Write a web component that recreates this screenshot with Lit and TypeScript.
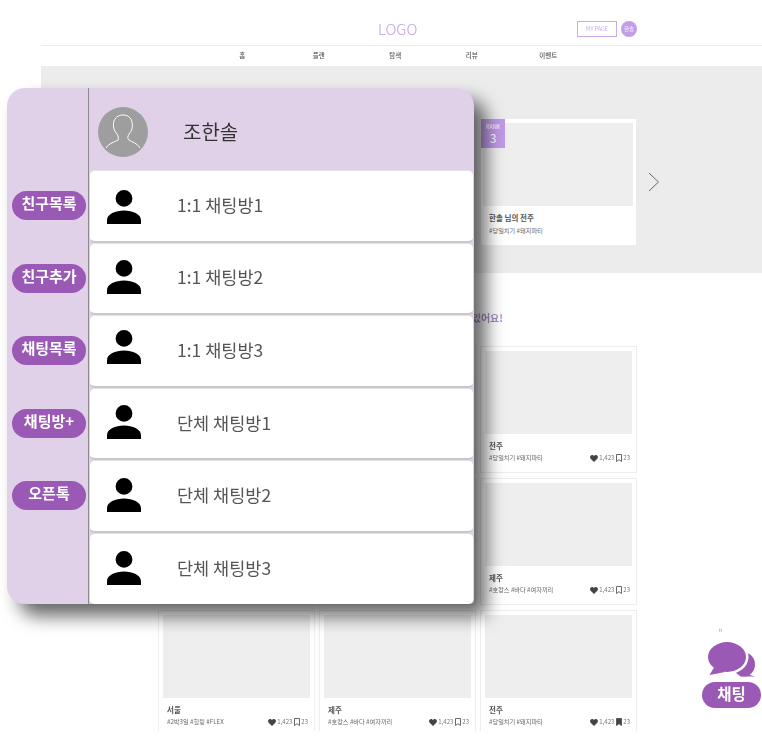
import { LitElement, html, css, svg } from 'lit'
import { customElement } from 'lit/decorators.js'

type Course = { city: string; tags: string; saved?: boolean; covered?: boolean }

const NAV = ['홈', '플랜', '탐색', '리뷰', '이벤트']
const COURSES: Course[] = [
  { city: '', tags: '', covered: true },
  { city: '', tags: '', covered: true },
  { city: '전주', tags: '#당일치기 #돼지파티' },
  { city: '', tags: '', covered: true },
  { city: '', tags: '', covered: true },
  { city: '제주', tags: '#호캉스 #바다 #여자끼리' },
  { city: '서울', tags: '#2박3일 #힐링 #FLEX' },
  { city: '제주', tags: '#호캉스 #바다 #여자끼리' },
  { city: '전주', tags: '#당일치기 #돼지파티', saved: true }
]
const MENU = ['친구목록', '친구추가', '채팅목록', '채팅방+', '오픈톡']
// dy: the icons do not sit at the same height in every row
const ROOMS = [
  { name: '1:1 채팅방1', dy: 1 },
  { name: '1:1 채팅방2', dy: -1 },
  { name: '1:1 채팅방3', dy: -4 },
  { name: '단체 채팅방1', dy: -2 },
  { name: '단체 채팅방2', dy: -1 },
  { name: '단체 채팅방3', dy: -1 }
]

const personIcon = svg`<path d="M17 0a8.4 8.4 0 1 1 0 16.8a8.4 8.4 0 1 1 0-16.8zM0 34v-3.5C0 24 8.5 20.6 17 20.6s17 3.4 17 9.9V34z"/>`

@customElement('app-root')
export class AppRoot extends LitElement {
  static styles = css`
    :host {
      display: block;
      position: relative;
      width: 762px;
      height: 747px;
      overflow: hidden;
      background: #fff;
      font-family: 'Noto Sans CJK KR', 'Noto Sans', sans-serif;
    }

    .page {
      height: 731px;
      margin-left: 41px;
      overflow: hidden;
      filter: blur(0.45px);
    }

    .top {
      height: 45px;
      display: flex;
      align-items: center;
      border-bottom: 1px solid #ebebeb;
    }

    .logo {
      margin-left: 337px;
      width: 199px;
      padding-top: 13px;
      font-size: 15px;
      font-weight: 300;
      line-height: 20px;
      color: #c3a2e6;
    }

    .my-page {
      width: 40px;
      height: 16px;
      margin-top: 13px;
      box-sizing: border-box;
      border: 1px solid #c9ace9;
      font-size: 5.5px;
      line-height: 14px;
      text-align: center;
      color: #c9ace9;
    }

    .me {
      width: 16px;
      height: 16px;
      margin: 13px 0 0 4px;
      border-radius: 50%;
      background: #c39ee8;
      color: #fff;
      font-size: 5.5px;
      line-height: 16px;
      text-align: center;
    }

    .nav {
      display: grid;
      grid-template-columns: repeat(5, 76.5px);
      height: 20px;
      margin-left: 163px;
      font-size: 6.5px;
      font-weight: 500;
      line-height: 19px;
      text-align: center;
      color: #555;
    }

    .hero {
      height: 207px;
      background: #ececec;
      display: flex;
      align-items: flex-start;
      padding: 53px 0 0 440px;
      box-sizing: border-box;
    }

    .rank-card {
      position: relative;
      width: 155px;
      height: 126px;
      padding: 4px 3px 0 2px;
      box-sizing: border-box;
      background: #fff;
    }

    .rank-card .thumb {
      height: 83px;
    }

    .rank-card .title {
      margin: 6px 0 0 6px;
    }

    .rank-card .tags {
      margin: 3px 0 0 6px;
    }

    .badge {
      position: absolute;
      left: 0;
      top: 0;
      width: 24px;
      height: 29px;
      background: #bf9ae6;
      color: #fff;
      font-size: 5.5px;
      line-height: 6px;
      text-align: center;
      padding-top: 5px;
      box-sizing: border-box;
    }

    .badge b {
      display: block;
      margin-top: 1px;
      font-size: 12px;
      font-weight: 400;
      line-height: 13px;
    }

    .next {
      margin: 53px 0 0 12px;
    }

    .heading {
      width: 462px;
      margin: 38px 0 21px;
      font-size: 10px;
      font-weight: 700;
      line-height: 14px;
      text-align: right;
      color: #a98cc9;
    }

    .courses {
      display: grid;
      grid-template-columns: repeat(3, 157px);
      column-gap: 4px;
      row-gap: 5px;
      margin-left: 117px;
    }

    .card {
      height: 127px;
      padding: 4px;
      box-sizing: border-box;
      border: 1px solid #eeeeee;
    }

    .thumb {
      height: 83px;
      background: #eeeeee;
    }

    .title {
      margin: 6px 0 0 4px;
      font-size: 7.5px;
      font-weight: 700;
      line-height: 11px;
      color: #555;
    }

    .tags {
      font-size: 6.2px;
      line-height: 10px;
      color: #666;
    }

    .foot {
      display: flex;
      align-items: center;
      justify-content: space-between;
      margin: 2px 2px 0 4px;
    }

    .stats {
      display: flex;
      align-items: center;
      gap: 1px;
      font-size: 6px;
      line-height: 10px;
      color: #777;
    }

    .stats span:first-of-type {
      margin-right: 1px;
    }

    .chat {
      position: absolute;
      left: 7px;
      top: 88px;
      width: 467px;
      height: 516px;
      display: flex;
      overflow: hidden;
      box-sizing: border-box;
      background: #e0d0e8;
      border-radius: 18px 18px 5px 18px;
      box-shadow: 12px 12px 18px rgba(0, 0, 0, 0.6);
    }

    .menu {
      flex: none;
      width: 81px;
      padding: 103px 0 0 5px;
      box-sizing: border-box;
      display: flex;
      flex-direction: column;
      gap: 43.6px;
    }

    .menu button {
      width: 74px;
      height: 29px;
      padding: 0 0 5px;
      border: 0;
      border-radius: 15px;
      background: #9b59b6;
      color: #fff;
      font-family: inherit;
      font-size: 15px;
      font-weight: 700;
      line-height: 20px;
    }

    .side {
      flex: 1;
      min-width: 0;
      border-left: 1px solid #8c8a8e;
      display: flex;
      flex-direction: column;
    }

    .me-row {
      flex: none;
      height: 82px;
      display: flex;
      align-items: center;
      padding: 5px 0 0 9px;
      box-sizing: border-box;
      font-size: 20px;
      color: #333;
    }

    .me-row span {
      margin-left: 35px;
    }

    .avatar {
      display: block;
    }

    .room {
      flex: none;
      height: 72.6px;
      margin: 0 1px;
      display: flex;
      align-items: center;
      padding-left: 17px;
      box-sizing: border-box;
      background: #fff;
      border-radius: 5px;
      border-top: 1px solid #e4e2e6;
      border-bottom: 2px solid #c8c6ca;
      font-size: 17.5px;
      color: #555;
    }

    .room svg {
      flex: none;
    }

    .room span {
      margin: 0 0 3px 36px;
    }

    .fab {
      position: absolute;
      left: 702px;
      top: 626px;
      width: 59px;
      display: flex;
      flex-direction: column;
      align-items: center;
    }

    .fab small {
      height: 16px;
      margin-right: 22px;
      font-size: 4px;
      line-height: 8px;
      color: #888;
    }

    .fab svg {
      display: block;
    }

    .fab div {
      width: 59px;
      height: 26px;
      margin-top: 4px;
      border-radius: 13px;
      background: #9b59b6;
      color: #fff;
      font-size: 15.5px;
      font-weight: 700;
      line-height: 23px;
      text-align: center;
    }
  `

  private renderCourse(course: Course) {
    if (course.covered) {
      return html`<div class="card"><div class="thumb"></div></div>`
    }
    return html`
      <div class="card">
        <div class="thumb"></div>
        <div class="title">${course.city}</div>
        <div class="foot">
          <div class="tags">${course.tags}</div>
          <div class="stats">
            <svg width="8" height="7" viewBox="0 0 8 7"><path fill="#444" d="M4 7L.7 3.700C-.6 2.300.3 0 2 0c.9 0 1.600.5 2 1.100C4.400.5 5.100 0 6 0c1.700 0 2.600 2.300 1.300 3.700z"/></svg>
            <span>1,423</span>
            <svg width="6" height="8" viewBox="0 0 6 8"><path fill=${course.saved ? '#444' : 'none'} stroke="#444" stroke-width=".8" d="M.5.5h5v7L3 5.700.5 7.500z"/></svg>
            <span>23</span>
          </div>
        </div>
      </div>
    `
  }

  render() {
    return html`
      <div class="page">
        <div class="top">
          <div class="logo">LOGO</div>
          <div class="my-page">MY PAGE</div>
          <div class="me">한솔</div>
        </div>
        <div class="nav">${NAV.map((item) => html`<div>${item}</div>`)}</div>
        <div class="hero">
          <div class="rank-card">
            <div class="thumb"></div>
            <div class="badge">RANK<b>3</b></div>
            <div class="title">한솔 님의 전주</div>
            <div class="tags">#당일치기 #돼지파티</div>
          </div>
          <svg class="next" width="12" height="20" viewBox="0 0 12 20">
            <path fill="none" stroke="#666" d="M1 1l9.500 9L1 19"/>
          </svg>
        </div>
        <div class="heading">있어요!</div>
        <div class="courses">${COURSES.map((course) => this.renderCourse(course))}</div>
      </div>

      <div class="chat">
        <div class="menu">
          ${MENU.map((item) => html`<button>${item}</button>`)}
        </div>
        <div class="side">
          <div class="me-row">
            <svg class="avatar" width="50" height="50" viewBox="0 0 50 50">
              <circle cx="25" cy="25" r="25" fill="#9e9e9e"/>
              <path fill="none" stroke="#fff" d="M8 41C11 36 17 35 20 33C21 31 20 29 19 27C15 23 15 17 16 14C18 9 22 8 25 8C29 8 33 10 34 15C35 20 34 24 31 27C30 29 29 31 31 33C34 35 39 36 42 41"/>
            </svg>
            <span>조한솔</span>
          </div>
          ${ROOMS.map(
            (room) => html`
              <div class="room">
                <svg width="34" height="34" viewBox="0 0 34 34" style="transform: translateY(${room.dy}px)">${personIcon}</svg>
                <span>${room.name}</span>
              </div>
            `
          )}
        </div>
      </div>

      <div class="fab">
        <small>tt</small>
        <svg width="47" height="36" viewBox="0 0 47 36">
          <ellipse cx="36" cy="22.500" rx="11" ry="12" fill="#9b59b6"/>
          <path fill="#9b59b6" d="M32 30L47 34.500H32z"/>
          <ellipse cx="19" cy="15" rx="21.500" ry="17.500" fill="#fff"/>
          <ellipse cx="19" cy="15" rx="19" ry="15" fill="#9b59b6"/>
          <path fill="#9b59b6" d="M7 24L1.500 33L17 30z"/>
        </svg>
        <div>채팅</div>
      </div>
    `
  }
}
